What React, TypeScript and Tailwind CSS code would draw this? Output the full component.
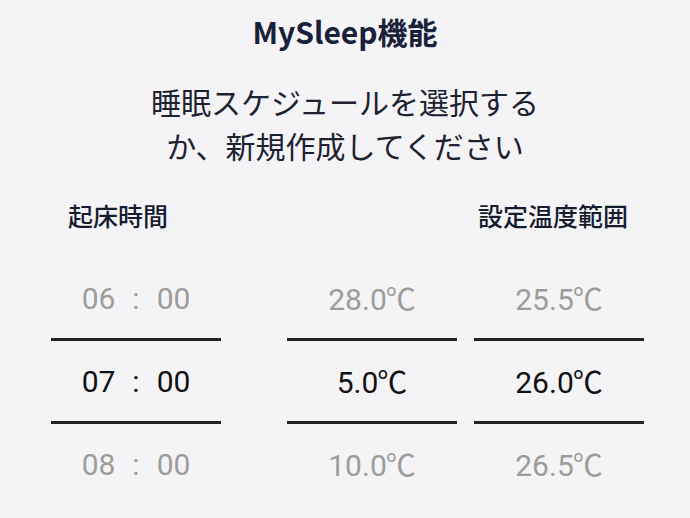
import React from "react";

const TIMES = [
  { h: "06", m: "00" },
  { h: "07", m: "00" },
  { h: "08", m: "00" },
];
const LOW = ["28.0", "5.0", "10.0"];
const HIGH = ["25.5", "26.0", "26.5"];

const jp = { fontFamily: '"Noto Sans CJK JP", "Noto Sans", sans-serif' };
const num = { fontFamily: 'Roboto, "Noto Sans CJK JP", sans-serif' };

function Cell({ active, children }: { active: boolean; children: React.ReactNode }) {
  return (
    <div
      className={`h-[80px] flex items-center justify-center text-[30px] ${active ? "text-[#111111]" : "text-[#9c9c9c]"}`}
      style={num}
    >
      {children}
    </div>
  );
}

function Column({ items }: { items: React.ReactNode[] }) {
  return (
    <div className="w-[170px] flex flex-col">
      <Cell active={false}>{items[0]}</Cell>
      <div className="h-[3px] bg-[#222222]" />
      <Cell active={true}>{items[1]}</Cell>
      <div className="h-[3px] bg-[#222222]" />
      <Cell active={false}>{items[2]}</Cell>
    </div>
  );
}

const temp = (v: string) => (
  <span>
    {v}
    <span className="ml-[-1px]" style={jp}>℃</span>
  </span>
);

export default function App() {
  return (
    <div className="w-[690px] h-[518px] bg-[#f4f4f6] overflow-hidden" style={jp}>
      <h1 className="pt-[11px] h-[40px] leading-[40px] text-center text-[30px] font-bold text-[#18203a] box-content">
        MySleep機能
      </h1>
      <p className="mt-[28px] text-center text-[30px] leading-[44px] text-[#1d2130]">
        睡眠スケジュールを選択する
        <br />
        か、新規作成してください
      </p>
      <div className="mt-[33px] flex justify-between pl-[68px] pr-[62px] text-[25px] leading-[30px] font-medium text-[#161c30]">
        <span>起床時間</span>
        <span>設定温度範囲</span>
      </div>
      <div className="mt-[28px] flex pl-[51px]">
        <Column
          items={TIMES.map((t) => (
            <span className="flex items-center gap-[17px]">
              <span>{t.h}</span>
              <span>:</span>
              <span>{t.m}</span>
            </span>
          ))}
        />
        <div className="w-[66px]" />
        <Column items={LOW.map(temp)} />
        <div className="w-[17px]" />
        <Column items={HIGH.map(temp)} />
      </div>
    </div>
  );
}
